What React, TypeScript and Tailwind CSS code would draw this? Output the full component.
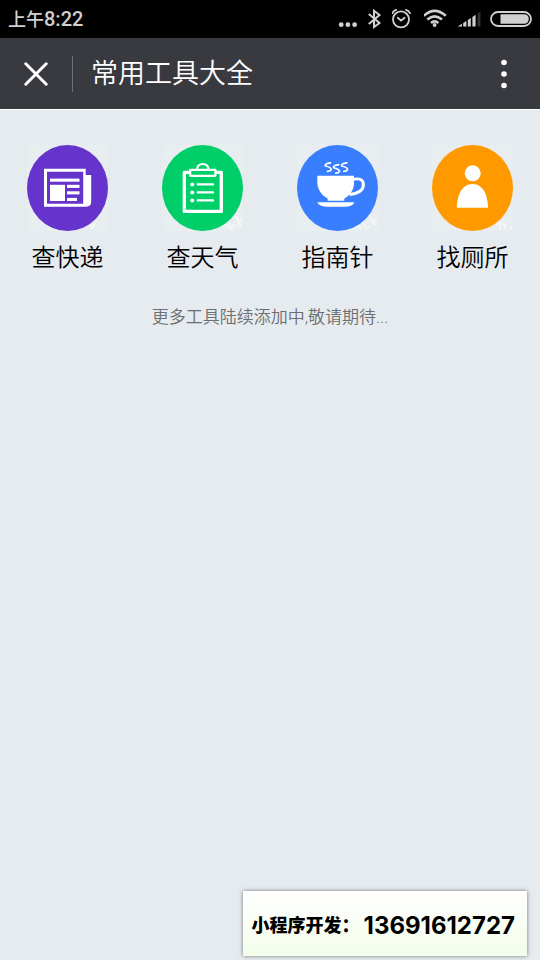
import React from 'react';

const cjk = "font-[Roboto,'Noto_Sans_CJK_SC',sans-serif]";

function StatusIcons() {
  return (
    <div className="flex items-center text-[#d0d0d0]" aria-hidden="true">
      <svg className="mr-2.5 h-5 w-5" viewBox="0 0 20 20" fill="currentColor">
        <circle cx="3.2" cy="15.7" r="2.4" />
        <circle cx="9.9" cy="15.7" r="2.4" />
        <circle cx="16.6" cy="15.7" r="2.4" />
      </svg>
      <svg className="mr-2.5 h-5 w-3.5" viewBox="0 0 14 20" fill="none" stroke="currentColor" strokeWidth="2">
        <path d="M0.8 5L11.5 14L6 18V1.8L11.5 6L0.8 15" />
      </svg>
      <svg className="mr-3 h-5 w-5" viewBox="0 0 20 20" fill="none" stroke="currentColor" strokeWidth="1.8" strokeLinecap="round">
        <circle cx="9" cy="10.4" r="8" />
        <path d="M5.8 8.8L9 11.6L12.6 8.8" />
        <path d="M0.4 4.2Q1.6 1.5 4.2 0.9M18 4.2Q16.6 1.5 14 0.9" />
      </svg>
      <svg className="mr-2.5 h-5 w-6" viewBox="0 0 24 20" fill="none" stroke="currentColor" strokeWidth="2.6">
        <path d="M-0.2 6.8Q10.6 -3 21.8 6.8" />
        <path d="M3.3 10.6Q10.6 4.2 18 10.6" />
        <path d="M7 14Q10.6 10.8 14.4 14" />
        <circle cx="10.6" cy="16" r="1.9" fill="currentColor" stroke="none" />
      </svg>
      <svg className="mr-2 h-5 w-6" viewBox="0 0 24 20" fill="currentColor">
        <path d="M-0.5 17.5L4 14.7V17.5ZM5.2 14L8.4 12V17.5H5.2ZM9.8 11L12.8 9.1V17.5H9.8ZM14.4 8L17.6 5.8V17.5H14.4Z" />
        <path d="M19.6 4.6L22.4 2.6V17.5H19.6Z" fill="#333333" />
      </svg>
      <svg className="h-5 w-[42px]" viewBox="0 0 42 20" fill="none">
        <rect x="1" y="3" width="40" height="14" rx="7" stroke="currentColor" strokeWidth="1.8" />
        <path d="M10.5 5.2H34A4.8 4.8 0 0 1 34 14.8H10.5Z" fill="currentColor" />
      </svg>
    </div>
  );
}

function Newspaper() {
  return (
    <g fill="#fff">
      <path fillRule="evenodd" d="M17 23.7H58.7V30H64.2V56.5Q64.2 61.7 59 61.7H17ZM20 26.7V58.7H56.2V26.7Z" />
      <rect x="23" y="33.6" width="29.5" height="3.1" />
      <rect x="23" y="39.8" width="15" height="16.2" />
      <rect x="40" y="39.8" width="12.5" height="3.1" />
      <rect x="40" y="46.3" width="12.5" height="3.1" />
      <rect x="40" y="52.9" width="10" height="3.1" />
    </g>
  );
}

function Clipboard() {
  return (
    <g fill="none" stroke="#fff" strokeLinecap="round" strokeLinejoin="round">
      <rect x="22.3" y="27.3" width="37" height="39.1" strokeWidth="3.3" />
      <rect x="28.2" y="24.8" width="25.2" height="6" fill="#00ce68" strokeWidth="2.2" />
      <path d="M35 24.2Q35.6 19 40.8 19T46.6 24.2" strokeWidth="2.2" />
      <g fill="#fff" stroke="none">
        <circle cx="30.2" cy="39.4" r="2" />
        <circle cx="30.2" cy="47.4" r="2" />
        <circle cx="30.2" cy="55.4" r="2" />
      </g>
      <path d="M35.7 39.4H51M35.7 47.4H51M35.7 55.4H51" strokeWidth="2.4" />
    </g>
  );
}

function Cup() {
  return (
    <g fill="#fff">
      <path d="M20.3 30.7H57V38C57 46 52 51 47.3 53.5V55.8H30.7V53.5C24 50 20.3 44 20.3 37Z" />
      <path d="M55 34.5Q66.4 32 66.4 39.5C66.4 46 59 48.8 52.5 49.6" fill="none" stroke="#fff" strokeWidth="3" />
      <path d="M20.3 57.2H57.3C56 60.6 52 61.8 47 61.8H31C26 61.8 22 60.6 20.3 57.2Z" />
      <g fill="none" stroke="#fff" strokeWidth="1.7" strokeLinecap="round">
        <path d="M33.5 17.8Q27 18.8 28.5 21Q34.6 22.4 34.2 24.6Q33.4 26.4 30.5 26.4" />
        <path d="M41.8 19.6Q35.3 20.6 36.8 22.8Q42.9 24.2 42.5 26.4Q41.7 28.2 38.8 28.2" />
        <path d="M49.8 17.8Q43.3 18.8 44.8 21Q50.9 22.4 50.5 24.6Q49.7 26.4 46.8 26.4" />
      </g>
    </g>
  );
}

function Person() {
  return (
    <g fill="#fff">
      <circle cx="40.7" cy="28.3" r="8" />
      <path d="M24.8 62.7C25 50 30 39 40.5 39S55.8 50 56 62.7Z" />
    </g>
  );
}

const tools = [
  { label: '查快递', color: '#6633cc', Icon: Newspaper, marks: 'M22 84l5-4 3 5M62 79l5 4M68 78l-3 6' },
  { label: '查天气', color: '#00ce68', Icon: Clipboard, marks: 'M60 82q4-5 6 1M67 78l2 6 4-5M74 71l5 11M76 77l4-3' },
  { label: '指南针', color: '#387eff', Icon: Cup, marks: 'M58 84l4-4 2 4M66 77l2 6 5-1M73 73l5 7M75 76l5-1' },
  { label: '找厕所', color: '#ff9900', Icon: Person, marks: 'M64 80l7-2M68 79v5M73 84l-1-4 3 1M79 84v-3' },
];

export default function App() {
  return (
    <div className={`flex min-h-screen flex-col bg-[#e6ebef] ${cjk}`}>
      <div className="flex h-[38px] items-center justify-between bg-black px-2">
        <div className="flex items-baseline font-medium text-[#d0d0d0]">
          <span className="text-lg leading-6">上午</span>
          <span className="text-xl leading-6">8:22</span>
        </div>
        <StatusIcons />
      </div>

      <header className="flex h-[72px] items-center border-b border-white bg-[#393a3f] text-white">
        <button type="button" aria-label="关闭" className="flex h-full w-[72px] items-center justify-center">
          <svg className="h-6 w-6" viewBox="0 0 24 24" fill="none" stroke="currentColor" strokeWidth="3" strokeLinecap="round">
            <path d="M1.8 1.8L22.2 22.2M22.2 1.8L1.8 22.2" />
          </svg>
        </button>
        <div className="h-9 w-px bg-[#707176]" />
        <h1 className="flex-1 pl-[18px] text-[27px] font-[350] leading-9">常用工具大全</h1>
        <button type="button" aria-label="更多" className="flex h-full w-[72px] items-center justify-center">
          <svg className="h-8 w-2" viewBox="0 0 8 32" fill="currentColor">
            <circle cx="4" cy="4.5" r="2.8" />
            <circle cx="4" cy="16" r="2.8" />
            <circle cx="4" cy="27.5" r="2.8" />
          </svg>
        </button>
      </header>

      <main>
        <nav className="grid grid-cols-4 pt-[35px]">
          {tools.map(({ label, color, Icon, marks }) => (
            <a key={label} href="#" className="flex flex-col items-center gap-[9px] text-black">
              <svg className="h-[86px] w-[81px] bg-[#e8edf0]" viewBox="0 0 81 86" aria-hidden="true">
                <path d={marks} fill="none" stroke="#f4f6f8" strokeWidth="2" />
                <ellipse cx="40.5" cy="43" rx="40.5" ry="43" fill={color} />
                <Icon />
              </svg>
              <span className="text-2xl font-[350] leading-9">{label}</span>
            </a>
          ))}
        </nav>
        <p className="mt-[29px] text-center text-[17px] font-[350] leading-6 text-[#6c6e70]">更多工具陆续添加中,敬请期待...</p>
      </main>

      <footer className="mb-1 mr-[13px] mt-auto flex h-[65px] items-center gap-1 self-end bg-linear-to-b from-white to-[#f3fdea] pl-[9px] pr-3 pt-1 text-black shadow-[0_0_4px_rgba(0,0,0,0.5)]">
        <span className="text-lg font-black leading-6">小程序开发：</span>
        <span className="font-[Inter,'Liberation_Sans',sans-serif] text-2xl font-bold leading-6">13691612727</span>
      </footer>
    </div>
  );
}
